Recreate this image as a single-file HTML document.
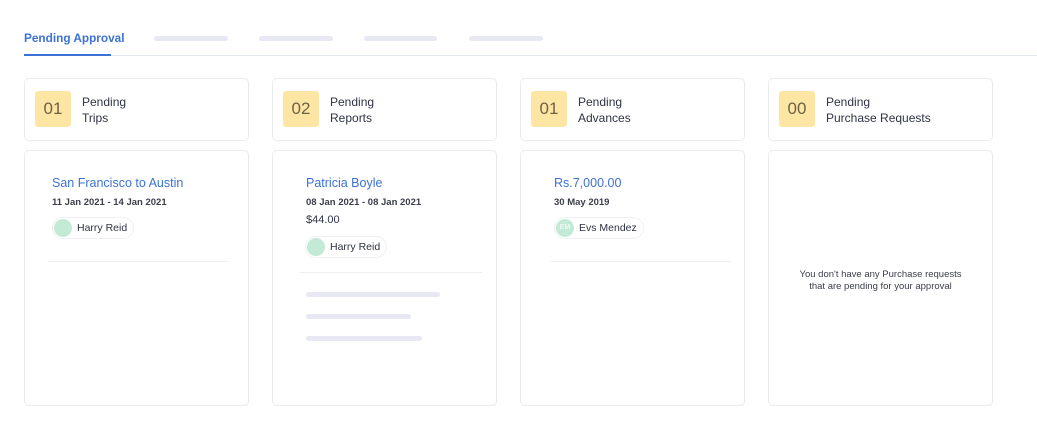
<!DOCTYPE html><html><head><style>
body{margin:0;width:1037px;height:430px;background:#fff;font-family:"Liberation Sans",sans-serif;position:relative;overflow:hidden;color:#2d3142}
.a{position:absolute}
.bar{position:absolute;height:5px;border-radius:3px;background:#e7e8f3}
.card{position:absolute;border:1px solid #e9eaee;border-radius:5px;background:#fff;box-sizing:border-box}
.badge{position:absolute;left:10px;top:12px;width:36px;height:36px;background:#fde5a3;border-radius:3px;color:#6e6242;font-size:17px;line-height:36px;text-align:center}
.lbl{position:absolute;left:57px;top:15px;font-size:12px;line-height:16px;color:#2f3344}
.ttl{position:absolute;font-size:12.5px;color:#3c72d6}
.dt{position:absolute;font-size:9.5px;font-weight:bold;color:#3b3e4a}
.chip{position:absolute;height:20px;border:1px solid #eef0f3;border-radius:11px;font-size:10.5px;line-height:20px;padding:0 6px 0 24px;color:#2f3344}
.chip i{position:absolute;left:1px;top:1px;width:18px;height:18px;border-radius:50%;background:#c3ead6;font-style:normal;font-size:7px;color:#fff;text-align:center;line-height:18px}
.hr{position:absolute;height:1px;background:#eceef1}
</style></head><body>
<div class="a" style="left:24px;top:31px;font-size:11.8px;font-weight:bold;color:#3c72d6">Pending Approval</div>
<div class="a" style="left:24px;top:55px;width:1013px;height:1px;background:#e2e6f0"></div>
<div class="a" style="left:24px;top:54px;width:87px;height:2px;background:#3c72d6"></div>
<div class="bar" style="left:154px;top:36px;width:74px"></div>
<div class="bar" style="left:259px;top:36px;width:74px"></div>
<div class="bar" style="left:364px;top:36px;width:73px"></div>
<div class="bar" style="left:469px;top:36px;width:74px"></div>

<div class="card" style="left:24px;top:78px;width:225px;height:63px"><div class="badge">01</div><div class="lbl">Pending<br>Trips</div></div>
<div class="card" style="left:272px;top:78px;width:225px;height:63px"><div class="badge">02</div><div class="lbl">Pending<br>Reports</div></div>
<div class="card" style="left:520px;top:78px;width:225px;height:63px"><div class="badge">01</div><div class="lbl">Pending<br>Advances</div></div>
<div class="card" style="left:768px;top:78px;width:225px;height:63px"><div class="badge">00</div><div class="lbl">Pending<br>Purchase Requests</div></div>

<div class="card" style="left:24px;top:150px;width:225px;height:256px"></div>
<div class="card" style="left:272px;top:150px;width:225px;height:256px"></div>
<div class="card" style="left:520px;top:150px;width:225px;height:256px"></div>
<div class="card" style="left:768px;top:150px;width:225px;height:256px"></div>

<div class="ttl" style="left:52px;top:176px">San Francisco to Austin</div>
<div class="dt" style="left:52px;top:197px">11 Jan 2021 - 14 Jan 2021</div>
<div class="chip" style="left:52px;top:217px"><i></i>Harry Reid</div>
<div class="hr" style="left:48px;top:261px;width:180px"></div>

<div class="ttl" style="left:306px;top:176px">Patricia Boyle</div>
<div class="dt" style="left:306px;top:197px">08 Jan 2021 - 08 Jan 2021</div>
<div class="a" style="left:306px;top:214px;font-size:11px;color:#2f3344">$44.00</div>
<div class="chip" style="left:305px;top:236px"><i></i>Harry Reid</div>
<div class="hr" style="left:300px;top:272px;width:182px"></div>
<div class="bar" style="left:306px;top:292px;width:134px"></div>
<div class="bar" style="left:306px;top:314px;width:105px"></div>
<div class="bar" style="left:306px;top:336px;width:116px"></div>

<div class="ttl" style="left:554px;top:176px">Rs.7,000.00</div>
<div class="dt" style="left:554px;top:197px">30 May 2019</div>
<div class="chip" style="left:554px;top:217px"><i>EM</i>Evs Mendez</div>
<div class="hr" style="left:551px;top:261px;width:180px"></div>

<div class="a" style="left:768px;top:269px;width:225px;text-align:center;font-size:9.5px;line-height:12px;color:#3b3e4a">You don't have any Purchase requests<br>that are pending for your approval</div>
</body></html>
